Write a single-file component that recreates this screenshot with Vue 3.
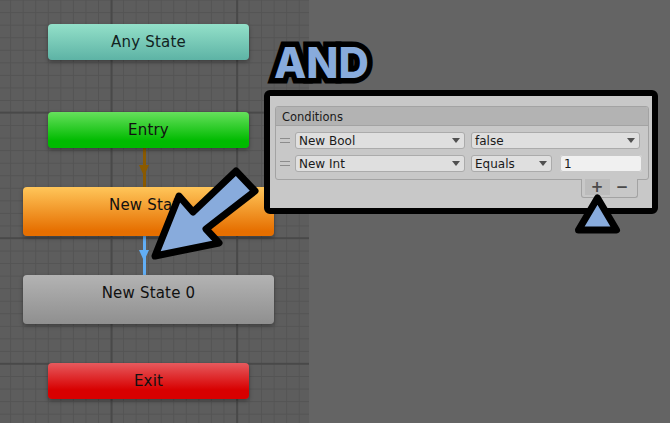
<template>
  <div class="stage">
    <div class="grid"></div>

    <div class="link link-entry"><i class="tip"></i></div>
    <div class="link link-state"><i class="tip"></i></div>

    <div
      v-for="node in nodes"
      :key="node.label"
      class="node"
      :class="node.kind"
    >
      {{ node.label }}
    </div>

    <div class="and">AND</div>

    <div class="callout">
      <div class="conditions">
        <div class="cond-title">Conditions</div>
        <div class="cond-row">
          <span class="grip"></span>
          <div class="select wide">New Bool<i class="caret"></i></div>
          <div class="select value">false<i class="caret"></i></div>
        </div>
        <div class="cond-row">
          <span class="grip"></span>
          <div class="select wide">New Int<i class="caret"></i></div>
          <div class="select mode">Equals<i class="caret"></i></div>
          <div class="number">1</div>
        </div>
      </div>
      <div class="footer">
        <span class="btn on">+</span>
        <span class="btn">−</span>
      </div>
    </div>

    <svg class="marks" width="670" height="423" viewBox="0 0 670 423">
      <path
        class="mark"
        d="M236 171 L255 191 L206 229 L219 243 L155 256 L179 196 L193 212 Z"
      />
      <path class="mark" d="M597.5 198 L616.5 230 L578.5 230 Z" />
    </svg>
  </div>
</template>

<script setup>
const nodes = [
  { label: 'Any State', kind: 'any' },
  { label: 'Entry', kind: 'entry' },
  { label: 'New State', kind: 'orange' },
  { label: 'New State 0', kind: 'grey' },
  { label: 'Exit', kind: 'exit' }
]
</script>

<style>
html, body {
  margin: 0;
  background: #646464;
}
</style>

<style scoped>
.stage {
  position: relative;
  width: 670px;
  height: 423px;
  overflow: hidden;
  background: #646464;
  font-family: "DejaVu Sans", sans-serif;
}

.grid {
  position: absolute;
  left: 0;
  top: 0;
  width: 309px;
  height: 423px;
  background-color: #5d5d5d;
  background-image:
    linear-gradient(#494949 2px, transparent 2px),
    linear-gradient(90deg, #494949 2px, transparent 2px),
    linear-gradient(#545454 1px, transparent 1px),
    linear-gradient(90deg, #545454 1px, transparent 1px);
  background-size: 125.6px 125.6px, 125.6px 125.6px, 12.56px 12.56px, 12.56px 12.56px;
  background-position: 0 -14px, -15px 0, 0 -0.4px, -2.4px 0;
}

.node {
  position: absolute;
  display: flex;
  justify-content: center;
  border-radius: 4px;
  font-size: 15px;
  letter-spacing: 0.2px;
  color: #111;
  box-shadow: 0 2px 4px rgba(0, 0, 0, 0.35);
}

.any, .entry, .exit {
  left: 48px;
  width: 201px;
  height: 36px;
  line-height: 37px;
}

.orange, .grey {
  left: 23px;
  width: 251px;
  height: 49px;
  line-height: 37px;
}

.any {
  top: 24px;
  background: linear-gradient(#93e0c9, #5db3a5);
  color: #12231f;
}

.entry {
  top: 112px;
  background: linear-gradient(#66e05c 0, #00bb00 80%);
}

.orange {
  top: 187px;
  background: linear-gradient(#ffc65a, #e66f00 90%);
}

.grey {
  top: 275px;
  background: linear-gradient(#b3b3b3, #8f8f8f);
}

.exit {
  top: 363px;
  background: linear-gradient(#e65a5e, #d80000 75%);
}

.link {
  position: absolute;
  left: 143px;
  width: 3px;
}

.link-entry {
  top: 148px;
  height: 39px;
  background: #8a5a00;
}

.link-state {
  top: 236px;
  height: 39px;
  background: #62aef5;
}

.tip {
  position: absolute;
  left: -4px;
  top: 17px;
  width: 0;
  height: 0;
  border-left: 5.5px solid transparent;
  border-right: 5.5px solid transparent;
  border-top: 11px solid #8a5a00;
}

.link-state .tip {
  top: 14px;
  border-top-color: #62aef5;
}

.marks {
  position: absolute;
  left: 0;
  top: 0;
}

.mark {
  fill: #88abdc;
  stroke: #000;
  stroke-width: 7px;
  stroke-linejoin: round;
}

.and {
  position: absolute;
  left: 274px;
  top: 36px;
  font-family: "Inter", "Liberation Sans", sans-serif;
  font-size: 42px;
  line-height: 54px;
  font-weight: 800;
  color: #88abdc;
  -webkit-text-stroke: 11px #000;
  paint-order: stroke fill;
}

.callout {
  position: absolute;
  left: 264px;
  top: 90px;
  box-sizing: border-box;
  width: 394px;
  height: 124px;
  padding: 10px 4px 0 5px;
  background: #c8c8c8;
  border: 6px solid #000;
  border-radius: 6px;
  font-size: 12px;
  color: #1a1a1a;
}

.conditions {
  width: 374px;
  height: 74px;
  box-sizing: border-box;
  border: 1px solid #a3a3a3;
  border-radius: 3px;
}

.cond-title {
  height: 18px;
  line-height: 20px;
  padding-left: 6px;
  font-size: 11.5px;
  background: #b3b3b3;
  border-bottom: 1px solid #a3a3a3;
  border-radius: 2px 2px 0 0;
}

.cond-row {
  display: flex;
  align-items: center;
  height: 17px;
  margin-top: 6px;
  gap: 6px;
  padding-left: 4px;
}

.grip {
  width: 10px;
  height: 3px;
  margin-right: -1px;
  border-top: 1px solid #8c8c8c;
  border-bottom: 1px solid #8c8c8c;
}

.select, .number {
  position: relative;
  box-sizing: border-box;
  height: 17px;
  line-height: 19px;
  padding-left: 4px;
  border-radius: 3px;
  background: #dfdfdf;
  box-shadow: inset 0 0 0 1px #ababab;
}

.wide {
  width: 170px;
}

.value {
  width: 169px;
}

.mode {
  width: 81px;
}

.number {
  width: 82px;
  margin-left: 2px;
  background: #f0f0f0;
  box-shadow: inset 0 0 0 1px #c8c8c8;
}

.caret {
  position: absolute;
  right: 5px;
  top: 6px;
  width: 0;
  height: 0;
  border-left: 4px solid transparent;
  border-right: 4px solid transparent;
  border-top: 5px solid #505050;
}

.footer {
  display: flex;
  justify-content: center;
  align-items: flex-start;
  box-sizing: border-box;
  width: 57px;
  height: 19px;
  margin: -1px 0 0 306px;
  background: #c8c8c8;
  border: 1px solid #a3a3a3;
  border-top: none;
  border-radius: 0 0 3px 3px;
}

.btn {
  width: 25px;
  height: 16px;
  line-height: 16px;
  text-align: center;
  font-size: 15px;
  font-weight: 700;
  color: #4a4a4a;
}

.btn.on {
  background: #bcbcbc;
}
</style>
